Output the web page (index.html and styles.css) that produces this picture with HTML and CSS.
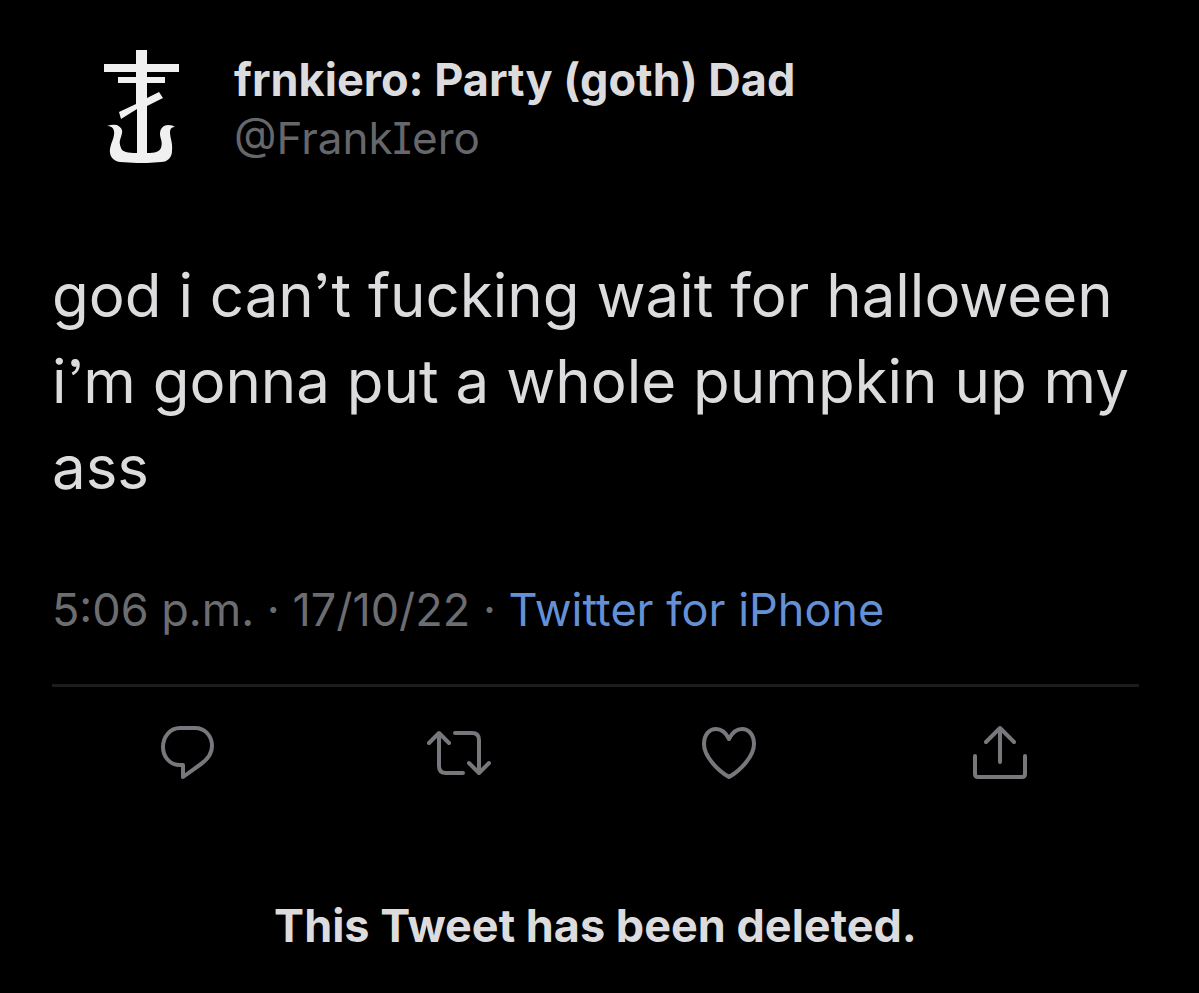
FILE: index.html
```html
<!DOCTYPE html>
<html lang="en">
<head>
<meta charset="utf-8">
<meta name="viewport" content="width=device-width, initial-scale=1">
<title>Tweet</title>
<link rel="stylesheet" href="styles.css">
</head>
<body>
<main class="page">
  <article class="tweet">
    <header class="author">
      <svg class="avatar" viewBox="0 0 80 120" aria-hidden="true">
        <path d="M34 2h11v14h32v8H45v5h18v6H45v15l12-6 4 6-16 8v47H35V61l-16 10-2-7 17-8V35H16v-6h18v-5H2v-8h32z"/>
        <path d="M5 78q5-2 10-1 6 3 5 8c-1 6-4 8-1 15 1 4 7 5 16 5h10c8 0 12-1 14-5 2-7-1-9-1-14 0-6 4-9 8-9q5 0 7 2-5 0-5 5c0 6 3 11 2 19 0 6-4 11-11 11l-14 1H35l-17-1C11 113 7 108 8 101c1-7 5-12 4-18q-1-5-7-5z"/>
      </svg>
      <div class="identity">
        <h1 class="name">frnkiero: Party (goth) Dad</h1>
        <a class="handle" href="#profile">@FrankIero</a>
      </div>
    </header>
    <p class="message">god i can’t fucking wait for halloween i’m gonna put a whole pumpkin up my ass</p>
    <p class="meta"><time datetime="2022-10-17T17:06">5:06 p.m. · 17/10/22</time> · <a class="source" href="#source">Twitter for iPhone</a></p>
    <div class="actions">
      <button class="action" aria-label="Reply"><svg viewBox="0 0 64 64"><path d="M25 6h15C50 6 57 14 57 24c0 8-4 13-11 18L28 55V43h-3C15 43 8 35 8 25S15 6 25 6z"/></svg></button>
      <button class="action" aria-label="Retweet"><svg viewBox="0 0 64 64"><path d="M3 21l10-10 10 10M13 12v32q0 7 7 7h17M63 41L53 51 43 41M53 50V18q0-7-7-7H29"/></svg></button>
      <button class="action" aria-label="Like"><svg viewBox="0 0 64 64"><path d="M32 55C20 48 7 34 7 22 7 13 12 7 19 7c6 0 10 4 13 10 3-6 7-10 13-10 7 0 12 6 12 15 0 12-13 26-25 33z"/></svg></button>
      <button class="action" aria-label="Share"><svg viewBox="0 0 64 64"><path d="M7 34v18q0 3 3 3h44q3 0 3-3V34M32 40V6M18 20L32 6l14 14"/></svg></button>
    </div>
  </article>
  <p class="notice">This Tweet has been deleted.</p>
</main>
</body>
</html>
```
FILE: styles.css
```css
* { box-sizing: border-box; }
body { margin: 0; background: #000; color: #dcdcde; font-family: Inter, "Noto Sans", sans-serif; }
.page { padding: 48px 60px 36px 52px; }
.author { display: flex; gap: 52px; padding-left: 50px; }
.avatar { flex: none; width: 80px; height: 120px; fill: #f0f0f0; }
.identity { display: flex; flex-direction: column; padding-top: 4px; }
.name { margin: 0; font-size: 45px; line-height: 56px; font-weight: 700; }
.handle { color: #66676b; font-size: 44px; line-height: 60px; font-feature-settings: "cv08"; text-decoration: none; }
.message { margin: 84px 0 0; font-size: 60px; line-height: 86px; font-feature-settings: "ss03"; }
.meta { margin: 72px 0 0; color: #6c6d70; font-size: 45px; line-height: 56px; }
.source { color: #6490d6; text-decoration: none; }
.actions { display: flex; justify-content: space-around; margin-top: 46px; padding: 35px 4px 0 0; border-top: 3px solid #1b1c1e; }
.action { padding: 0; border: 0; background: none; cursor: pointer; }
.action svg { display: block; width: 64px; height: 64px; overflow: visible; fill: none; stroke: #77787b; stroke-width: 4; stroke-linecap: round; stroke-linejoin: round; }
.notice { margin: 112px 0 0; text-align: center; font-size: 45px; line-height: 56px; font-weight: 700; }
```
